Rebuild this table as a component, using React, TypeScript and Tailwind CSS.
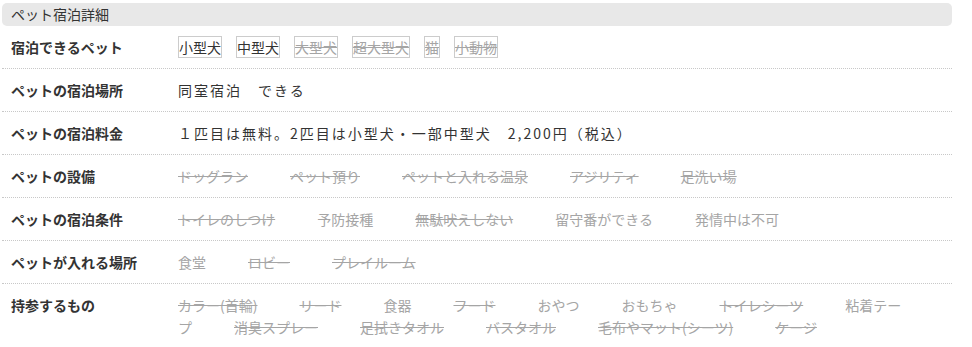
import React, {ReactElement} from "react";

type State = "on" | "off" | "na";
type Item = [string, State];

const petTypes: Item[] = [
    ["小型犬", "on"],
    ["中型犬", "on"],
    ["大型犬", "off"],
    ["超大型犬", "off"],
    ["猫", "off"],
    ["小動物", "off"],
];

const rows: {label: string; items: Item[]}[] = [
    {
        label: "ペットの設備",
        items: [
            ["ドッグラン", "off"],
            ["ペット預り", "off"],
            ["ペットと入れる温泉", "off"],
            ["アジリティ", "off"],
            ["足洗い場", "off"],
        ],
    },
    {
        label: "ペットの宿泊条件",
        items: [
            ["トイレのしつけ", "off"],
            ["予防接種", "na"],
            ["無駄吠えしない", "off"],
            ["留守番ができる", "na"],
            ["発情中は不可", "na"],
        ],
    },
    {
        label: "ペットが入れる場所",
        items: [
            ["食堂", "na"],
            ["ロビー", "off"],
            ["プレイルーム", "off"],
        ],
    },
    {
        label: "持参するもの",
        items: [
            ["カラー(首輪)", "off"],
            ["リード", "off"],
            ["食器", "na"],
            ["フード", "off"],
            ["おやつ", "na"],
            ["おもちゃ", "na"],
            ["トイレシーツ", "off"],
            ["粘着テープ", "na"],
            ["消臭スプレー", "off"],
            ["足拭きタオル", "off"],
            ["バスタオル", "off"],
            ["毛布やマット(シーツ)", "off"],
            ["ケージ", "off"],
        ],
    },
];

function Row({label, children}: {label: string; children: React.ReactNode}): ReactElement {
    return (
        <div className="flex flex-row border-b border-dotted border-[#c8c8c8] py-[10px] leading-[22px]">
            <div className="w-[176px] shrink-0 pl-[9px] font-bold text-[#333]">{label}</div>
            <div className="flex-1 pr-[40px]">{children}</div>
        </div>
    );
}

function Tag({text, state}: {text: string; state: State}): ReactElement {
    const cls =
        state === "on"
            ? "text-[#333]"
            : state === "off"
                ? "text-[#a5a5a5] line-through"
                : "text-[#a5a5a5]";
    return <span className={"mr-[42px] " + cls}>{text}</span>;
}

export default function App(): ReactElement {
    return (
        <div
            className="w-[972px] h-[347px] overflow-hidden bg-white px-[2px] pt-[3px] text-[14px]"
            style={{fontFamily: '"Noto Sans CJK JP", "Noto Sans", sans-serif'}}
        >
            <div className="w-[950px]">
                <div className="h-[23px] rounded-[5px] bg-[#e8e8e8] pl-[9px] leading-[23px] text-[#333]">
                    ペット宿泊詳細
                </div>

                <Row label="宿泊できるペット">
                    <div className="flex flex-row gap-[14px]">
                        {petTypes.map(([text, state]) => (
                            <span
                                key={text}
                                className={
                                    "border border-[#ccc] leading-[20px] " +
                                    (state === "on" ? "text-[#333]" : "text-[#a5a5a5] line-through")
                                }
                            >
                                {text}
                            </span>
                        ))}
                    </div>
                </Row>
                <Row label="ペットの宿泊場所">
                    <span className="tracking-[2px] text-[#333]">同室宿泊　できる</span>
                </Row>
                <Row label="ペットの宿泊料金">
                    <span className="tracking-[2px] text-[#333]">
                        １匹目は無料。2匹目は小型犬・一部中型犬　2,200円（税込）
                    </span>
                </Row>
                {rows.map((row) => (
                    <Row key={row.label} label={row.label}>
                        {row.items.map(([text, state]) => (
                            <Tag key={text} text={text} state={state} />
                        ))}
                    </Row>
                ))}
            </div>
        </div>
    );
}
